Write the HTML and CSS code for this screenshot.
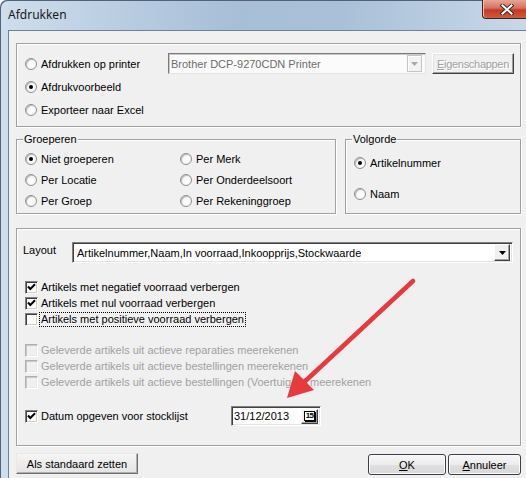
FILE: index.html
```html
<!DOCTYPE html>
<html>
<head>
<meta charset="utf-8">
<link rel="stylesheet" href="styles.css">
</head>
<body>
<div class="window">
  <div class="titlebar">
    <span class="title">Afdrukken</span>
    <div class="close">
      <svg width="14" height="11" viewBox="0 0 14 11">
        <path d="M2.5 1.5 L11.5 9.5 M11.5 1.5 L2.5 9.5" stroke="#3a2a2a" stroke-width="4" stroke-linecap="square"/>
        <path d="M2.5 1.5 L11.5 9.5 M11.5 1.5 L2.5 9.5" stroke="#ffffff" stroke-width="2" stroke-linecap="square"/>
      </svg>
    </div>
  </div>
  <div class="client">
    <div class="group g-output">
      <div class="row">
        <label class="opt w-printer"><span class="radio"></span>Afdrukken op printer</label>
        <div class="combo combo-printer">
          <span class="combo-text">Brother DCP-9270CDN Printer</span>
          <span class="dd dd-disabled"><svg width="7" height="4" viewBox="0 0 7 4"><path d="M0 0 H7 L3.5 4 Z" fill="#a8a8a8"/></svg></span>
        </div>
        <div class="btn-classic btn-eig"><u>E</u>igenschappen</div>
      </div>
      <div class="row"><label class="opt"><span class="radio on"></span>Afdrukvoorbeeld</label></div>
      <div class="row"><label class="opt"><span class="radio"></span>Exporteer naar Excel</label></div>
    </div>

    <div class="mid">
      <div class="group g-groep">
        <span class="legend">Groeperen</span>
        <label class="opt"><span class="radio on"></span>Niet groeperen</label>
        <label class="opt"><span class="radio"></span>Per Merk</label>
        <label class="opt"><span class="radio"></span>Per Locatie</label>
        <label class="opt"><span class="radio"></span>Per Onderdeelsoort</label>
        <label class="opt"><span class="radio"></span>Per Groep</label>
        <label class="opt"><span class="radio"></span>Per Rekeninggroep</label>
      </div>
      <div class="group g-volg">
        <span class="legend">Volgorde</span>
        <label class="opt"><span class="radio on"></span>Artikelnummer</label>
        <label class="opt"><span class="radio"></span>Naam</label>
      </div>
    </div>

    <div class="group g-layout">
      <div class="layout-row">
        <span class="layout-label">Layout</span>
        <div class="combo combo-layout">
          <span class="combo-text">Artikelnummer,Naam,In voorraad,Inkoopprijs,Stockwaarde</span>
          <span class="dd"><svg width="7" height="4" viewBox="0 0 7 4"><path d="M0 0 H7 L3.5 4 Z" fill="#000"/></svg></span>
        </div>
      </div>
      <div class="checks">
        <label class="chk"><span class="box"><svg width="11" height="11" viewBox="0 0 11 11"><path d="M2 4.5 L4.3 7 L9 2.3" stroke="#000" stroke-width="2" fill="none"/></svg></span>Artikels met negatief voorraad verbergen</label>
        <label class="chk"><span class="box"><svg width="11" height="11" viewBox="0 0 11 11"><path d="M2 4.5 L4.3 7 L9 2.3" stroke="#000" stroke-width="2" fill="none"/></svg></span>Artikels met nul voorraad verbergen</label>
        <label class="chk"><span class="box"></span><span class="focus">Artikels met positieve voorraad verbergen</span></label>
      </div>
      <div class="checks disabled">
        <label class="chk"><span class="box"></span>Geleverde artikels uit actieve reparaties meerekenen</label>
        <label class="chk"><span class="box"></span>Geleverde artikels uit actieve bestellingen meerekenen</label>
        <label class="chk"><span class="box"></span>Geleverde artikels uit actieve bestellingen (Voertuigen) meerekenen</label>
      </div>
      <div class="date-row">
        <label class="chk w-datum"><span class="box"><svg width="11" height="11" viewBox="0 0 11 11"><path d="M2 4.5 L4.3 7 L9 2.3" stroke="#000" stroke-width="2" fill="none"/></svg></span>Datum opgeven voor stocklijst</label>
        <div class="datebox">
          <span class="date-text">31/12/2013</span>
          <span class="cal"><span class="cal-icon">15</span></span>
        </div>
      </div>
    </div>

    <div class="buttons">
      <div class="btn-classic btn-std">Als standaard zetten</div>
      <div class="spacer"></div>
      <div class="btn7 btn-ok"><u>O</u>K</div>
      <div class="btn7 btn-cancel"><u>A</u>nnuleer</div>
    </div>
  </div>

  <svg class="arrow" width="526" height="478" viewBox="0 0 526 478">
    <path d="M413 281 L300 386" stroke="#e83a3c" stroke-width="4.5" stroke-linecap="round" fill="none"/>
    <path d="M287 398 L295 371 L314 390 Z" fill="#e83a3c"/>
  </svg>
</div>
</body>
</html>
```

FILE: styles.css
```css
html, body {
  margin: 0;
  padding: 0;
}
body {
  width: 526px;
  height: 478px;
  overflow: hidden;
  font-family: "Liberation Sans", Arial, sans-serif;
  font-size: 11px;
  color: #000;
  background: #fff;
}
.window {
  position: relative;
  width: 526px;
  height: 478px;
  display: flex;
  flex-direction: column;
  border-top-left-radius: 7px;
  background: linear-gradient(to right, #cfdeed 0%, #bccfe3 20%, #a7bed7 45%, #a9c0d8 65%, #bfd1e4 90%, #c8d8e8 100%);
  box-shadow: inset 1px 1px 0 #51637a;
}
.titlebar {
  height: 30px;
  flex: none;
  display: flex;
  align-items: flex-start;
}
.title {
  padding: 8px 0 0 8px;
  font-family: "Noto Sans", "Liberation Sans", sans-serif;
  font-size: 12px;
  line-height: 14px;
  color: #1a1a1a;
}
.close {
  margin-left: auto;
  width: 44px;
  height: 19px;
  box-sizing: border-box;
  border: 1px solid #3e2522;
  border-top: none;
  border-right: none;
  border-bottom-left-radius: 4px;
  background: linear-gradient(#e6a597 0%, #d6705f 45%, #c33a26 55%, #cf5a3e 100%);
  box-shadow: inset 1px 0 0 #f0c0b0;
  display: flex;
  align-items: center;
  justify-content: center;
  padding-left: 4px;
}
.client {
  flex: 1;
  margin-left: 8px;
  background: #f0f0f0;
  border-top: 1px solid #6d8096;
  border-left: 1px solid #6d8096;
  padding: 12px 5px 0 7px;
  display: flex;
  flex-direction: column;
}
.group {
  position: relative;
  box-sizing: border-box;
  border: 1px solid #a0a0a0;
  box-shadow: inset 1px 1px 0 #ffffff, 1px 1px 0 #ffffff;
}
.legend {
  position: absolute;
  top: -8px;
  left: 6px;
  padding: 0 1px;
  line-height: 14px;
  background: #f0f0f0;
}
.row {
  height: 23px;
  display: flex;
  align-items: center;
}
.opt, .chk {
  display: flex;
  align-items: center;
  white-space: nowrap;
}
.opt {
  gap: 4px;
}
.chk {
  gap: 3px;
  height: 16px;
}
.radio {
  flex: none;
  width: 12px;
  height: 12px;
  box-sizing: border-box;
  border-radius: 50%;
  border: 1px solid #8e8f8f;
  background: radial-gradient(circle at 60% 60%, #ffffff 0%, #f4f4f4 60%, #dcdcdc 100%);
  box-shadow: inset 1px 1px 0 #bdbdbd;
  position: relative;
}
.radio.on::after {
  content: "";
  position: absolute;
  left: 3px;
  top: 3px;
  width: 4px;
  height: 4px;
  border-radius: 50%;
  background: #000;
}
.g-output {
  height: 84px;
  padding: 8px 0 0 8px;
}
.w-printer {
  width: 143px;
  flex: none;
}
.combo {
  box-sizing: border-box;
  background: #fff;
  display: flex;
  align-items: center;
  justify-content: space-between;
}
.combo-printer {
  width: 258px;
  height: 21px;
  border: 1px solid #a9a9a9;
  border-color: #7a7a7a #e3e3e3 #e3e3e3 #7a7a7a;
  box-shadow: inset 1px 1px 0 #c8c8c8;
  margin-right: 6px;
  padding: 0 3px 0 2px;
  color: #6d6d6d;
  background: #fbfbfb;
}
.combo-text {
  white-space: nowrap;
  overflow: hidden;
}
.dd {
  flex: none;
  width: 16px;
  height: 17px;
  box-sizing: border-box;
  background: #f0f0f0;
  border: 1px solid;
  border-color: #fff #404040 #404040 #fff;
  box-shadow: inset -1px -1px 0 #a0a0a0;
  display: flex;
  align-items: center;
  justify-content: center;
}
.dd-disabled {
  width: 15px;
  height: 17px;
  border-color: #c5c5c5;
  box-shadow: inset 1px 1px 0 #fff;
  background: #f3f3f3;
}
.btn-classic {
  box-sizing: border-box;
  height: 21px;
  display: flex;
  align-items: center;
  justify-content: center;
  background: #f0f0f0;
  border: 1px solid;
  border-color: #ffffff #404040 #404040 #ffffff;
  box-shadow: inset -1px -1px 0 #a0a0a0, inset 1px 1px 0 #e3e3e3;
}
.btn-eig {
  width: 82px;
  color: #a0a0a0;
  text-shadow: 1px 1px 0 #fff;
  letter-spacing: -0.3px;
}
.mid {
  display: flex;
  gap: 9px;
  margin-top: 12px;
}
.g-groep {
  width: 320px;
  height: 75px;
  padding: 8px 0 0 8px;
  display: grid;
  grid-template-columns: 155px auto;
  grid-auto-rows: 21px;
  align-content: start;
}
.g-volg {
  width: 176px;
  height: 75px;
  padding: 12px 0 0 8px;
  display: flex;
  flex-direction: column;
  gap: 10px;
}
.g-volg .opt {
  height: 21px;
}
.g-layout {
  margin-top: 14px;
  height: 218px;
  padding: 13px 7px 0 6px;
}
.layout-row {
  display: flex;
  align-items: flex-start;
}
.layout-label {
  width: 49px;
  flex: none;
  padding-top: 2px;
}
.combo-layout {
  flex: 1;
  height: 21px;
  border: 1px solid;
  border-color: #808080 #ffffff #ffffff #808080;
  box-shadow: inset 1px 1px 0 #404040, inset -1px -1px 0 #e3e3e3;
  padding: 0 2px 0 4px;
}
.checks {
  margin-top: 16px;
  padding-left: 2px;
  display: flex;
  flex-direction: column;
}
.checks.disabled {
  margin-top: 15px;
  color: #a0a0a0;
}
.box {
  flex: none;
  width: 13px;
  height: 13px;
  box-sizing: border-box;
  background: #fff;
  border: 1px solid;
  border-color: #808080 #ffffff #ffffff #808080;
  box-shadow: inset 1px 1px 0 #404040, inset -1px -1px 0 #d4d0c8;
  display: flex;
  align-items: center;
  justify-content: center;
}
.checks.disabled .box {
  background: #f0f0f0;
  border-color: #b0b0b0 #ffffff #ffffff #b0b0b0;
  box-shadow: inset 1px 1px 0 #c8c8c8, inset -1px -1px 0 #e8e8e8;
}
.focus {
  outline: 1px dotted #000;
  outline-offset: 0;
  line-height: 13px;
  padding: 0 1px;
  margin-left: -1px;
}
.date-row {
  margin-top: 16px;
  padding-left: 2px;
  display: flex;
  align-items: center;
  height: 20px;
}
.w-datum {
  width: 206px;
  flex: none;
}
.datebox {
  width: 90px;
  height: 20px;
  box-sizing: border-box;
  background: #fff;
  border: 1px solid;
  border-color: #808080 #ffffff #ffffff #808080;
  box-shadow: inset 1px 1px 0 #404040, inset -1px -1px 0 #e3e3e3;
  display: flex;
  align-items: center;
  justify-content: space-between;
  padding: 0 2px 0 2px;
}
.cal {
  width: 17px;
  height: 15px;
  box-sizing: border-box;
  background: #f0f0f0;
  border: 1px solid;
  border-color: #fff #404040 #404040 #fff;
  box-shadow: inset -1px -1px 0 #a0a0a0;
  display: flex;
  align-items: center;
  justify-content: center;
}
.cal-icon {
  width: 11px;
  height: 10px;
  box-sizing: border-box;
  border: 1px solid #000;
  box-shadow: 1px 1px 0 #000;
  font-size: 8px;
  line-height: 8px;
  font-family: "Liberation Sans", sans-serif;
  font-weight: bold;
  letter-spacing: -0.6px;
  text-align: center;
  color: #000;
  background: #fff;
  overflow: hidden;
}
.buttons {
  margin-top: 7px;
  display: flex;
  align-items: flex-start;
  gap: 2px;
}
.btn-std {
  width: 122px;
  height: 21px;
  background: linear-gradient(#f5f5f5, #e4e4e4);
  border-color: #e8e8e8 #6f6f6f #6f6f6f #e8e8e8;
  box-shadow: inset -1px -1px 0 #b0b0b0;
}
.spacer {
  flex: 1;
}
.btn7 {
  box-sizing: border-box;
  height: 21px;
  margin-top: 1px;
  display: flex;
  align-items: center;
  justify-content: center;
  border: 1px solid #3a3f47;
  border-radius: 3px;
  background: linear-gradient(#f6f6f6 0%, #ececec 50%, #e0e0e0 51%, #d8d8d8 100%);
  box-shadow: inset 0 0 0 1px #fbfbfb;
}
.btn-ok {
  width: 78px;
}
.btn-cancel {
  width: 73px;
}
.arrow {
  position: absolute;
  left: 0;
  top: 0;
  pointer-events: none;
}
```
